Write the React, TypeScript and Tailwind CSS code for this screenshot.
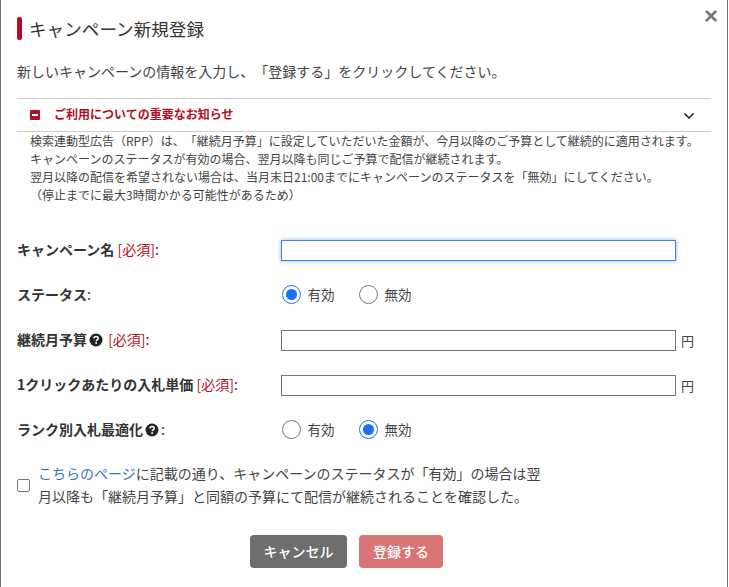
import { ChevronDown } from 'lucide-react';

const fontStack = "font-['Noto_Sans_CJK_JP','Liberation_Sans',sans-serif] [text-spacing-trim:space-all]";

function HelpIcon() {
  return (
    <svg viewBox="0 0 14 14" className="size-[14px] shrink-0 mx-[2px]">
      <circle cx="7" cy="7" r="6.5" fill="#222" />
      <path d="M4.9 5.4C5 4.2 5.9 3.5 7.1 3.5c1.2 0 2.1.7 2.1 1.8 0 1.6-2 1.6-2 3" fill="none" stroke="#fff" strokeWidth="1.5" />
      <rect x="6.3" y="9.2" width="1.7" height="1.6" fill="#fff" />
    </svg>
  );
}

function Required() {
  return <span className="text-[#b50d23] font-normal"> [必須]</span>;
}

function Radio({ checked, label }: { checked: boolean; label: string }) {
  return (
    <div className="flex items-center gap-[7px] w-[77px] ml-[0.5px] mr-[-0.5px] -mt-[2px]">
      {checked ? (
        <span className="size-[19px] rounded-full border-[1.5px] border-[#1a6dff] flex items-center justify-center shrink-0">
          <span className="size-[11px] rounded-full bg-[#1a6dff]" />
        </span>
      ) : (
        <span className="size-[19px] rounded-full border-[1.5px] border-[#767676] shrink-0" />
      )}
      <span className="text-[13.5px] leading-[18px] text-[#444] -translate-y-px">{label}</span>
    </div>
  );
}

function Row({ label, children }: { label: React.ReactNode; children: React.ReactNode }) {
  return (
    <div className="flex items-center h-[45px]">
      <div className="w-[264px] text-[14px] font-bold text-[#333] flex items-center whitespace-pre -mt-[2px]">{label}</div>
      <div className="flex items-center">{children}</div>
    </div>
  );
}

function YenInput() {
  return (
    <>
      <div className="w-[395px] h-[21px] border border-[#767676] bg-white" />
      <span className="text-[13px] text-[#444] ml-[5px]">円</span>
    </>
  );
}

export default function App() {
  return (
    <div className={`w-[729px] h-[587px] overflow-hidden bg-white ${fontStack}`}>
      <div className="relative w-[728px] h-[587px] border-l border-r border-[#777] px-[16px] pt-[17px]">
        <span className="absolute top-[4px] right-[9px] text-[#777] text-[24px] leading-6 font-bold font-['Liberation_Sans',sans-serif]">×</span>

        <div className="flex items-center gap-[7px] h-[23px]">
          <span className="w-[5px] h-[23px] bg-[#b50d23] rounded-[2px]" />
          <h1 className="text-[17.6px] text-[#333] leading-none">キャンペーン新規登録</h1>
        </div>

        <p className="text-[14px] text-[#444] leading-5 mt-[21px]">
          新しいキャンペーンの情報を入力し、「登録する」をクリックしてください。
        </p>

        <div className="w-[694px] h-[34px] mt-[17px] border-y border-[#ccc] flex items-center pl-[13px] pr-[14px]">
          <span className="w-[10px] h-[10px] bg-[#b50d23] rounded-[1px] flex items-center justify-center">
            <span className="w-[6px] h-[2px] bg-white" />
          </span>
          <span className="ml-[14px] text-[12px] leading-4 font-bold text-[#b50d23] flex-1 -translate-y-px">ご利用についての重要なお知らせ</span>
          <ChevronDown className="size-[16px] text-[#222] translate-y-px" strokeWidth={2.5} />
        </div>

        <div className="pl-[13px] text-[12px] leading-[18px] text-[#444] whitespace-nowrap h-[100px]">
          <p>検索連動型広告（RPP）は、「継続月予算」に設定していただいた金額が、今月以降のご予算として継続的に適用されます。</p>
          <p>キャンペーンのステータスが有効の場合、翌月以降も同じご予算で配信が継続されます。</p>
          <p>翌月以降の配信を希望されない場合は、当月末日21:00までにキャンペーンのステータスを「無効」にしてください。</p>
          <p>（停止までに最大3時間かかる可能性があるため）</p>
        </div>

        <div className="mt-[-4px]">
          <Row label={<>キャンペーン名<Required /><span className="font-normal">:</span></>}>
            <div className="w-[395px] h-[21px] border border-[#3f82f0] bg-white shadow-[0_0_4px_rgba(63,130,240,0.6)]" />
          </Row>
          <Row label={<>ステータス<span className="font-normal">:</span></>}>
            <Radio checked label="有効" />
            <Radio checked={false} label="無効" />
          </Row>
          <Row label={<>継続月予算<HelpIcon /><Required /><span className="font-normal">:</span></>}>
            <YenInput />
          </Row>
          <Row label={<>1クリックあたりの入札単価<Required /><span className="font-normal">:</span></>}>
            <YenInput />
          </Row>
          <Row label={<>ランク別入札最適化<HelpIcon /><span className="font-normal">:</span></>}>
            <Radio checked={false} label="有効" />
            <Radio checked label="無効" />
          </Row>
        </div>

        <div className="flex items-center mt-[9px] gap-[8px]">
          <span className="size-[13px] border border-[#767676] rounded-[2px] bg-white shrink-0" />
          <p className="text-[14px] leading-[23px] text-[#444] w-[510px]">
            <span className="text-[#337ab7]">こちらのページ</span>に記載の通り、キャンペーンのステータスが「有効」の場合は翌月以降も「継続月予算」と同額の予算にて配信が継続されることを確認した。
          </p>
        </div>

        <div className="flex justify-center gap-[12px] mt-[27px] pr-[35px]">
          <div className="w-[97px] h-[33px] rounded-[4px] bg-[#6e6e6e] text-white text-[14px] font-medium flex items-center justify-center">キャンセル</div>
          <div className="w-[84px] h-[33px] rounded-[4px] bg-[#da7576] text-white text-[14px] font-medium flex items-center justify-center">登録する</div>
        </div>
      </div>
    </div>
  );
}
